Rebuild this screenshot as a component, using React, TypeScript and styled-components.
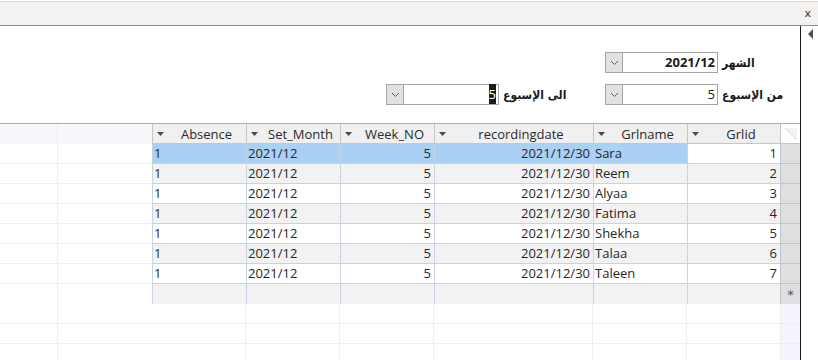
import React from "react";
import styled, { createGlobalStyle } from "styled-components";

const GRID_BORDER = "#c8d2e2";
const VOID_BORDER = "#eceef4";

const GlobalStyle = createGlobalStyle`
  html, body {
    margin: 0;
    padding: 0;
    background: #ffffff;
    overflow: hidden;
  }
  * {
    box-sizing: border-box;
  }
`;

interface Column {
  key: string;
  title: string;
  width: number;
  align: "left" | "right";
}

const columns: Column[] = [
  { key: "absence", title: "Absence", width: 94, align: "left" },
  { key: "month", title: "Set_Month", width: 94, align: "left" },
  { key: "week", title: "Week_NO", width: 94, align: "right" },
  { key: "date", title: "recordingdate", width: 159, align: "right" },
  { key: "name", title: "Grlname", width: 94, align: "left" },
  { key: "id", title: "Grlid", width: 93, align: "right" },
];

const names = ["Sara", "Reem", "Alyaa", "Fatima", "Shekha", "Talaa", "Taleen"];

const rows = names.map((name, i) => ({
  absence: "1",
  month: "2021/12",
  week: "5",
  date: "2021/12/30",
  name,
  id: String(i + 1),
}));

const gridTemplate = `58px 94px ${columns.map((c) => c.width + "px").join(" ")} 20px`;

function HeadArrow() {
  return (
    <svg width="7" height="4" viewBox="0 0 7 4">
      <polygon points="0,0 7,0 3.5,4" fill="#4a4a4a" />
    </svg>
  );
}

function Chevron() {
  return (
    <svg width="9" height="6" viewBox="0 0 9 6">
      <polyline points="1,1 4.5,4.5 8,1" fill="none" stroke="#606060" strokeWidth="1" />
    </svg>
  );
}

function ComboBox({ value, bold, selected }: { value: string; bold?: boolean; selected?: boolean }) {
  return (
    <Combo>
      <ComboButton>
        <Chevron />
      </ComboButton>
      <ComboText $bold={bold}>
        {selected ? <Selected>{value}</Selected> : value}
      </ComboText>
    </Combo>
  );
}

export default function App() {
  return (
    <>
      <GlobalStyle />
      <Window>
        <TitleBar>
          <Close>x</Close>
        </TitleBar>
        <Body>
          <Main>
            <FormArea>
              <FormRow>
                <Field>
                  <ComboBox value="2021/12" bold />
                  <Label $width={58}>الشهر</Label>
                </Field>
              </FormRow>
              <FormRow>
                <Field>
                  <ComboBox value="5" selected />
                  <Label $width={76}>الى الإسبوع</Label>
                </Field>
                <Field>
                  <ComboBox value="5" />
                  <Label $width={58}>من الإسبوع</Label>
                </Field>
              </FormRow>
            </FormArea>

            <Sheet>
              <Row>
                <VoidHead $line />
                <VoidHead />
                {columns.map((c) => (
                  <HeadCell key={c.key}>
                    <HeadArrow />
                    <HeadTitle>{c.title}</HeadTitle>
                  </HeadCell>
                ))}
                <SelectAll>
                  <svg width="12" height="12" viewBox="0 0 12 12">
                    <polygon points="0,0 12,12 12,0" fill="#f4f4f4" />
                    <line x1="0" y1="0" x2="12" y2="12" stroke="#d4d8de" strokeWidth="1" />
                  </svg>
                </SelectAll>
              </Row>

              {rows.map((r, i) => (
                <Row key={r.id}>
                  <VoidCell $line />
                  <VoidCell />
                  {columns.map((c) => {
                    const selected = i === 0 && c.key !== "id";
                    return (
                      <DataCell
                        key={c.key}
                        $align={c.align}
                        $bg={selected ? "#a9d1f3" : i % 2 === 1 ? "#f2f2f2" : "#ffffff"}
                      >
                        {r[c.key as keyof typeof r]}
                      </DataCell>
                    );
                  })}
                  <Selector />
                </Row>
              ))}

              <Row>
                <VoidCell $line />
                <VoidCell />
                {columns.map((c) => (
                  <DataCell key={c.key} $align={c.align} $bg="#f2f2f2" />
                ))}
                <Selector>*</Selector>
              </Row>

              {[0, 1, 2].map((n) => (
                <Row key={n}>
                  <VoidCell $line />
                  <VoidCell />
                  {columns.map((c, ci) => (
                    <VoidCell key={c.key} $line={ci < columns.length - 1} />
                  ))}
                  <VoidSelector />
                </Row>
              ))}
            </Sheet>
          </Main>
          <SideStrip>
            <svg width="5" height="10" viewBox="0 0 5 10">
              <polygon points="5,0 5,10 0,5" fill="#505050" />
            </svg>
          </SideStrip>
        </Body>
      </Window>
    </>
  );
}

const Window = styled.div`
  width: 818px;
  height: 360px;
  display: flex;
  flex-direction: column;
  padding-top: 1px;
  font-family: "Open Sans", "Noto Sans", sans-serif;
  color: #262626;
  overflow: hidden;
`;

const TitleBar = styled.div`
  height: 25px;
  flex: none;
  display: flex;
  justify-content: flex-end;
  align-items: center;
  background: #f3f2f1;
  border-top: 1px solid #d6d6d6;
  border-bottom: 1px solid #8e8e8e;
  padding-right: 7px;
`;

const Close = styled.span`
  font-family: "DejaVu Sans", sans-serif;
  font-size: 11px;
  color: #333;
  line-height: 1;
  margin-top: -1px;
`;

const Body = styled.div`
  flex: 1;
  display: flex;
  min-height: 0;
`;

const Main = styled.div`
  width: 801px;
  flex: none;
  border-right: 1px solid #1a1a1a;
  display: flex;
  flex-direction: column;
  overflow: hidden;
`;

const SideStrip = styled.div`
  flex: 1;
  display: flex;
  justify-content: center;
  align-items: flex-start;
  padding-top: 3px;
  padding-left: 1px;
`;

const FormArea = styled.div`
  height: 97px;
  flex: none;
  display: flex;
  flex-direction: column;
  gap: 11px;
  padding-top: 26px;
  padding-right: 20px;
`;

const FormRow = styled.div`
  display: flex;
  justify-content: flex-end;
  gap: 26px;
  height: 21px;
`;

const Field = styled.div`
  display: flex;
  align-items: center;
  gap: 4px;
`;

const Label = styled.div<{ $width: number }>`
  width: ${(p) => p.$width}px;
  font-family: "DejaVu Sans Condensed", "DejaVu Sans", sans-serif;
  font-stretch: condensed;
  font-size: 12px;
  font-weight: bold;
  color: #1a1a1a;
  white-space: nowrap;
  display: flex;
  justify-content: flex-start;
`;

const Combo = styled.div`
  display: flex;
  height: 21px;
  width: 113px;
  border: 1px solid #a5a5a5;
  background: #fff;
`;

const ComboButton = styled.div`
  width: 17px;
  flex: none;
  background: #e1e1e1;
  border-right: 1px solid #a5a5a5;
  display: flex;
  align-items: center;
  justify-content: center;
`;

const ComboText = styled.div<{ $bold?: boolean }>`
  flex: 1;
  text-align: right;
  padding-right: 2px;
  font-size: 13px;
  line-height: 19px;
  font-weight: ${(p) => (p.$bold ? 700 : 400)};
  color: #1a1a1a;
`;

const Selected = styled.span`
  background: #1b1b1b;
  color: #fff;
  padding: 1px 0;
`;

const Sheet = styled.div`
  border-top: 1px solid #acacac;
  display: flex;
  flex-direction: column;
`;

const Row = styled.div`
  display: grid;
  grid-template-columns: ${gridTemplate};
  height: 20px;
  flex: none;
`;

const VoidHead = styled.div<{ $line?: boolean }>`
  background: #f7f8fc;
  border-right: ${(p) => (p.$line ? `1px solid ${VOID_BORDER}` : "none")};
`;

const VoidCell = styled.div<{ $line?: boolean }>`
  background: #ffffff;
  border-bottom: 1px solid ${VOID_BORDER};
  border-right: ${(p) => (p.$line ? `1px solid ${VOID_BORDER}` : "none")};
`;

const HeadCell = styled.div`
  display: flex;
  align-items: center;
  background: #f0f0f0;
  border-left: 1px solid #c6c6c6;
  border-bottom: 1px solid #c6c6c6;
  padding-left: 4px;
  font-size: 13px;
  color: #2a2a2a;
`;

const HeadTitle = styled.span`
  flex: 1;
  text-align: center;
  padding-left: 3px;
  white-space: nowrap;
`;

const SelectAll = styled.div`
  background: #ffffff;
  border-left: 1px solid #c6c6c6;
  border-bottom: 1px solid #c6c6c6;
  display: flex;
  align-items: center;
  justify-content: center;
`;

const DataCell = styled.div<{ $align: "left" | "right"; $bg: string }>`
  background: ${(p) => p.$bg};
  border-left: 1px solid ${GRID_BORDER};
  border-bottom: 1px solid ${GRID_BORDER};
  text-align: ${(p) => p.$align};
  padding: 0 3px 0 1px;
  font-size: 13px;
  line-height: 19px;
  white-space: nowrap;
  overflow: hidden;
`;

const Selector = styled.div`
  background: #dedfe1;
  border-left: 1px solid #c0c3c8;
  border-bottom: 1px solid #c0c3c8;
  text-align: center;
  font-family: "DejaVu Sans", sans-serif;
  font-size: 13px;
  line-height: 22px;
  color: #555;
`;

const VoidSelector = styled.div`
  background: #f4f5fc;
  border-left: 1px solid ${VOID_BORDER};
  border-bottom: 1px solid ${VOID_BORDER};
`;
